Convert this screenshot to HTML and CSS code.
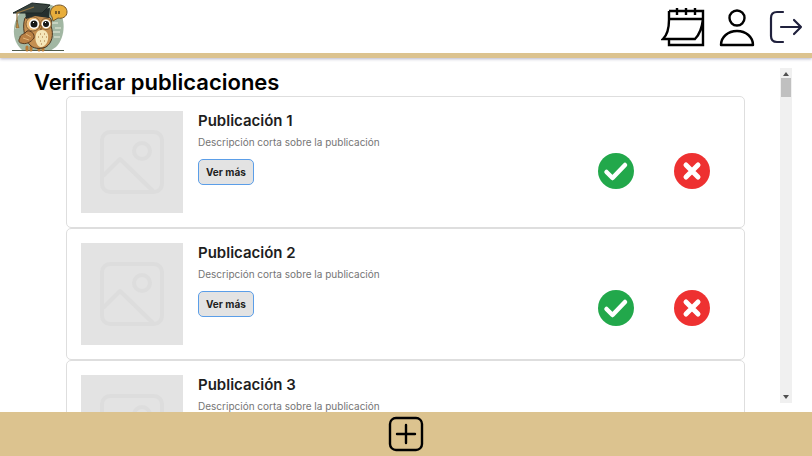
FILE: index.html
```html
<!DOCTYPE html>
<html lang="es">
<head>
<meta charset="utf-8">
<meta name="viewport" content="width=device-width, initial-scale=1">
<title>Verificar publicaciones</title>
<link rel="stylesheet" href="styles.css">
</head>
<body>
<svg class="defs" aria-hidden="true">
  <symbol id="picture" viewBox="0 0 102 102">
    <g fill="none" stroke="#dddddd" stroke-width="4" stroke-linejoin="round">
      <rect x="21" y="21" width="60" height="60" rx="8"/>
      <circle cx="61" cy="40" r="8"/>
      <path d="M22 65l17-17 33 32"/>
    </g>
  </symbol>
  <symbol id="approve" viewBox="0 0 36 36">
    <circle cx="18" cy="18" r="18" fill="#22a84b"/>
    <path d="M8.500 19l6 6L27 12" fill="none" stroke="#fff" stroke-width="4.500" stroke-linecap="round" stroke-linejoin="round"/>
  </symbol>
  <symbol id="reject" viewBox="0 0 36 36">
    <circle cx="18" cy="18" r="18" fill="#ee3131"/>
    <path d="M12 12l12 12M24 12L12 24" fill="none" stroke="#fff" stroke-width="5" stroke-linecap="round"/>
  </symbol>
</svg>
<header class="topbar">
  <a class="logo" href="#" aria-label="Inicio">
    <svg width="56" height="51" viewBox="0 0 56 51">
      <path d="M10 49C-1 40 0 22 8 12 17 1 35-1 45 7c9 9 9 29-1 39l-6 4z" fill="#a2b7a3"/>
      <path d="M38 22h8M43 27h6M41 31h7M3 27h4M42 36h6" stroke="#d3ddcc" stroke-width="1.300"/>
      <path d="M0 49.500h52" stroke="#4e5a4c" stroke-width="1.200"/>
      <path d="M15 46v3m4-3v3m8-3v3m4-3v3" stroke="#b97b35" stroke-width="3" stroke-linecap="round"/>
      <path d="M13 17c2-2 6-3 10-3l14 2c3 2 3 6 2 9 3 9 1 17-5 21-5 2-11 2-15-1-7-6-9-20-6-28z" fill="#c58f50" stroke="#493521" stroke-width="1"/>
      <path d="M26 30c4-2 9-1 10 4s-2 12-7 12-8-11-3-16z" fill="#f5e6b9"/>
      <path d="M28 33h1m3 0h1m-7 3h1m3 0h1m3 0h1m-7 4h1m3 0h1m-4 3h1" stroke="#a4713a" stroke-width="1.200"/>
      <path d="M15 30c-2 3-8 4-7 7-2 2-1 5 1 5 5 2 10-1 13-5 1-4-3-8-7-7z" fill="#b98045" stroke="#573a21"/>
      <path d="M11 37l6 2m-3-6l5 3" stroke="#e2b577"/>
      <circle cx="21" cy="23" r="7" fill="#edbd78" stroke="#6c4a2a" stroke-width=".8"/>
      <circle cx="34" cy="23" r="5.500" fill="#edbd78" stroke="#6c4a2a" stroke-width=".8"/>
      <circle cx="22" cy="23" r="5" fill="#fff"/>
      <circle cx="34" cy="23" r="4.300" fill="#fff"/>
      <circle cx="22" cy="23" r="3.500" fill="#171817"/>
      <circle cx="34" cy="23" r="3" fill="#171817"/>
      <path d="M21 21.500h1m11 0h1" stroke="#fff"/>
      <path d="M27 25l3 0-1 4z" fill="#df963a" stroke="#553a22" stroke-width=".6"/>
      <path d="M13 9l1 9 9-3 14 2 1-10z" fill="#25302e"/>
      <path d="M1 12L20 2l18 2-8 8z" fill="#39443f" stroke="#1e2826"/>
      <path d="M22 6L5 12v9" fill="none" stroke="#967844" stroke-width="1.200"/>
      <path d="M5 19l-1 8h3z" fill="#c49143" stroke="#6c512b" stroke-width=".5"/>
      <path d="M41 20l-1-4c-4-5 0-12 7-12 5 0 8 3 8 7 0 5-5 7-9 6z" fill="#e8ae3c" stroke="#74562a"/>
      <path d="M44 10v3m3-3v3" stroke="#5d4522" stroke-width="1.600"/>
    </svg>
  </a>
  <nav class="nav" aria-label="Principal">
    <a href="#" aria-label="Calendario">
      <svg width="44" height="40" viewBox="0 0 44 40" fill="none" stroke="#000" stroke-width="2.400">
        <path d="M8 4h34v34H8v-5M8 12h34M8 4v9C8 22 6 28 2 32h32c5-5 7-11 8-20M16 1v7M25 1v7M34 1v7"/>
      </svg>
    </a>
    <a href="#" aria-label="Perfil">
      <svg width="36" height="40" viewBox="0 0 36 40" fill="none" stroke="#000" stroke-width="2.400" stroke-linejoin="round">
        <circle cx="18" cy="11" r="7.500"/><path d="M2 38c0-8 7-14 16-14s16 6 16 14z"/>
      </svg>
    </a>
    <a href="#" aria-label="Cerrar sesión">
      <svg width="34" height="40" viewBox="0 0 34 40" fill="none" stroke="#20213d" stroke-width="2.200" stroke-linecap="round" stroke-linejoin="round">
        <path d="M14 5H8C4 5 2 7 2 11v18c0 4 2 6 6 6h6M12 20h20M25 13l7 7-7 7"/>
      </svg>
    </a>
  </nav>
</header>
<main class="content">
  <section class="posts">
    <h1>Verificar publicaciones</h1>
    <article class="card">
      <svg class="thumb" aria-hidden="true"><use href="#picture"/></svg>
      <div class="info"><h2>Publicación 1</h2><p>Descripción corta sobre la publicación</p><button class="more" type="button">Ver más</button></div>
      <div class="actions">
        <button type="button" aria-label="Aprobar"><svg><use href="#approve"/></svg></button>
        <button type="button" aria-label="Rechazar"><svg><use href="#reject"/></svg></button>
      </div>
    </article>
    <article class="card">
      <svg class="thumb" aria-hidden="true"><use href="#picture"/></svg>
      <div class="info"><h2>Publicación 2</h2><p>Descripción corta sobre la publicación</p><button class="more" type="button">Ver más</button></div>
      <div class="actions">
        <button type="button" aria-label="Aprobar"><svg><use href="#approve"/></svg></button>
        <button type="button" aria-label="Rechazar"><svg><use href="#reject"/></svg></button>
      </div>
    </article>
    <article class="card">
      <svg class="thumb" aria-hidden="true"><use href="#picture"/></svg>
      <div class="info"><h2>Publicación 3</h2><p>Descripción corta sobre la publicación</p></div>
    </article>
  </section>
  <div class="scrollbar" aria-hidden="true">
    <svg width="6" height="4" viewBox="0 0 6 4"><path d="M0 4l3-4 3 4z" fill="#505050"/></svg>
    <div class="thumb-bar"></div>
    <svg class="down" width="6" height="4" viewBox="0 0 6 4"><path d="M0 0l3 4 3-4z" fill="#505050"/></svg>
  </div>
</main>
<footer class="bottombar">
  <button type="button" aria-label="Añadir publicación">
    <svg width="36" height="36" viewBox="0 0 36 36" fill="none" stroke="#000" stroke-width="2.400" stroke-linecap="round"><rect x="2" y="2" width="32" height="32" rx="6"/><path d="M18 9v18M9 18h18"/></svg>
  </button>
</footer>
</body>
</html>
```
FILE: styles.css
```css
* {
  box-sizing: border-box;
}

body {
  display: flex;
  flex-direction: column;
  height: 100vh;
  margin: 0;
  background: #fff;
  color: #000;
  font-family: Inter, sans-serif;
}

h1, h2, p {
  margin: 0;
}

svg {
  display: block;
}

button {
  padding: 0;
  border: 0;
  background: none;
  font-family: inherit;
  cursor: pointer;
}

.defs {
  position: absolute;
  width: 0;
  height: 0;
}

.topbar {
  display: flex;
  flex: none;
  align-items: center;
  justify-content: space-between;
  padding: 0 9px 0 12px;
  border-bottom: 5px solid #dcc38f;
  box-shadow: 0 1px 3px #b5b5c8;
}

.logo {
  padding: 1px 0;
}

.nav {
  display: flex;
  gap: 14px;
}

.content {
  display: flex;
  flex: 1;
  min-height: 0;
  padding: 0 20px 0 34px;
  overflow: hidden;
}

.posts {
  flex: 1;
  padding: 10px 35px 0 0;
}

h1 {
  font-size: 22px;
  font-weight: 600;
  line-height: 28px;
}

.card {
  display: flex;
  gap: 15px;
  margin-left: 32px;
  padding: 14px;
  border: 1px solid #dedede;
  border-radius: 5px;
}

.thumb {
  flex: none;
  width: 102px;
  height: 102px;
  background: #e3e3e3;
}

.info {
  flex: 1;
}

h2 {
  color: #1e1e1e;
  font-size: 15px;
  font-weight: 600;
  line-height: 20px;
}

.info p {
  margin: 4px 0 10px;
  color: #757575;
  font-size: 10px;
  line-height: 14px;
}

.more {
  height: 26px;
  padding: 0 7px;
  border: 1px solid #5b9ee8;
  border-radius: 5px;
  background: #e3e3e3;
  color: #1e1e1e;
  font-size: 10px;
  font-weight: 700;
}

.actions {
  display: flex;
  gap: 40px;
  align-items: flex-start;
  padding: 42px 20px 0 0;
}

.card + .card .actions {
  padding-top: 47px;
}

.actions svg {
  width: 36px;
  height: 36px;
}

.scrollbar {
  display: flex;
  flex-direction: column;
  align-items: center;
  width: 12px;
  margin: 10px 0 9px;
  padding: 4px 1px;
  background: #f0f0f0;
}

.thumb-bar {
  width: 100%;
  height: 19px;
  margin-top: 2px;
  background: #c0c0c0;
}

.down {
  margin-top: auto;
}

.bottombar {
  display: flex;
  flex: none;
  justify-content: center;
  padding: 4px 0;
  background: #dcc38f;
}
```
